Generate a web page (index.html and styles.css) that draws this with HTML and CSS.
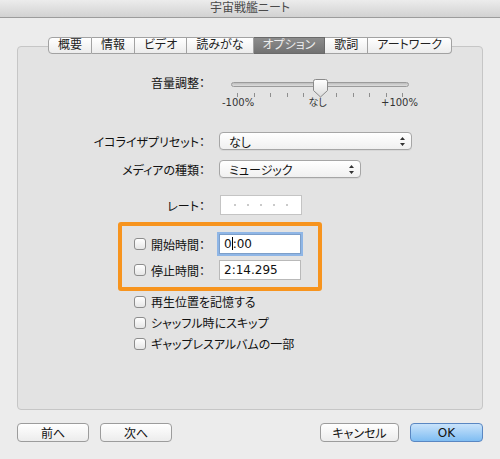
FILE: index.html
```html
<!DOCTYPE html>
<html lang="ja">
<head>
<meta charset="utf-8">
<title>宇宙戦艦ニート</title>
<link rel="stylesheet" href="styles.css">
</head>
<body>

<div class="window">
<!-- タイトルバー -->
<div class="titlebar">宇宙戦艦ニート</div>

<div class="dialog">
<!-- タブ -->
<div class="tabs">
<span class="tab">概要</span>
<span class="tab">情報</span>
<span class="tab">ビデオ</span>
<span class="tab">読みがな</span>
<span class="tab active">オプション</span>
<span class="tab">歌詞</span>
<span class="tab">アートワーク</span>
</div>

<div class="panel">
<!-- 音量調整 -->
<div class="row row-volume">
<label class="label">音量調整：</label>
<div class="slider">
<div class="track"></div>
<svg class="thumb" width="15" height="19" viewBox="0 0 15 19">
<defs>
<linearGradient id="thumbFill" x1="0" y1="0" x2="0" y2="1">
<stop offset="0" stop-color="#ffffff"/>
<stop offset="1" stop-color="#dcdcdc"/>
</linearGradient>
</defs>
<path d="M2.5 0.5 H12.5 A2 2 0 0 1 14.5 2.5 V11.5 L7.5 18 L0.5 11.5 V2.5 A2 2 0 0 1 2.5 0.5 Z" fill="url(#thumbFill)" stroke="#8a8a8a"/>
</svg>
<div class="ticks">
<i></i><i></i><i></i><i></i><i></i><i></i><i></i><i></i><i></i><i></i><i></i>
</div>
<div class="tick-labels">
<span>-100%</span>
<span>なし</span>
<span>+100%</span>
</div>
</div>
</div>

<!-- イコライザ -->
<div class="row row-eq">
<label class="label">イコライザプリセット：</label>
<div class="popup popup-wide">
<span>なし</span>
<svg class="arrows" width="5" height="9" viewBox="0 0 5 9"><path d="M2.5 0 L5 3 H0 Z M2.5 9 L5 6 H0 Z" fill="#333"/></svg>
</div>
</div>

<!-- メディアの種類 -->
<div class="row row-media">
<label class="label">メディアの種類：</label>
<div class="popup popup-narrow">
<span>ミュージック</span>
<svg class="arrows" width="5" height="9" viewBox="0 0 5 9"><path d="M2.5 0 L5 3 H0 Z M2.5 9 L5 6 H0 Z" fill="#333"/></svg>
</div>
</div>

<!-- レート -->
<div class="row row-rate">
<label class="label">レート：</label>
<div class="rating">
<i></i><i></i><i></i><i></i><i></i>
</div>
</div>

<!-- 開始・停止時間 -->
<div class="highlight">
<div class="time-row">
<label class="check"><span class="box"></span>開始時間：</label>
<div class="field focused">0<span class="caret"></span>:00</div>
</div>
<div class="time-row">
<label class="check"><span class="box"></span>停止時間：</label>
<div class="field">2:14.295</div>
</div>
</div>

<!-- チェックボックス -->
<div class="options">
<label class="check"><span class="box"></span>再生位置を記憶する</label>
<label class="check"><span class="box"></span>シャッフル時にスキップ</label>
<label class="check"><span class="box"></span>ギャップレスアルバムの一部</label>
</div>
</div>

<!-- ボタン -->
<div class="buttons">
<div class="btn-group">
<button class="btn">前へ</button>
<button class="btn">次へ</button>
</div>
<div class="btn-group">
<button class="btn btn-cancel">キャンセル</button>
<button class="btn btn-ok">OK</button>
</div>
</div>
</div>
</div>

</body>
</html>
```

FILE: styles.css
```css
* {
margin: 0;
padding: 0;
box-sizing: border-box;
}

body {
background: #ececec;
font-family: "DejaVu Sans", "Noto Sans CJK JP", sans-serif;
font-size: 12px;
font-feature-settings: "palt";
color: #111;
}

.window {
width: 500px;
height: 459px;
background: #ececec;
}

/* タイトルバー */
.titlebar {
height: 18px;
line-height: 17px;
text-align: center;
color: #4a4a4a;
background: linear-gradient(#ececec, #d2d2d2);
border-bottom: 1px solid #9c9c9c;
}

.dialog {
padding: 0 17px;
}

/* タブ */
.tabs {
position: relative;
z-index: 1;
display: flex;
justify-content: center;
margin-top: 19px;
}

.tab {
height: 17px;
line-height: 15px;
padding: 0 9px;
background: linear-gradient(#ffffff, #ececec);
border: 1px solid #a2a2a2;
border-left: none;
color: #222;
}

.tab:first-child {
border-left: 1px solid #a2a2a2;
border-radius: 4px 0 0 4px;
}

.tab:last-child {
border-radius: 0 4px 4px 0;
}

.tab.active {
background: linear-gradient(#8c8c8c, #727272);
border-color: #6a6a6a;
color: #ececec;
}

/* パネル */
.panel {
height: 364px;
margin-top: -8px;
padding-top: 29px;
background: #e3e3e3;
border: 1px solid #c6c6c6;
border-radius: 4px;
}

.row {
display: grid;
grid-template-columns: 187px auto;
column-gap: 14px;
align-items: center;
}

.label {
text-align: right;
}

.row-volume {
align-items: start;
}

.row-volume .label {
line-height: 16px;
}

.row-eq {
margin-top: 23px;
}

.row-media {
margin-top: 10px;
}

.row-rate {
margin-top: 17px;
}

/* スライダー */
.slider {
position: relative;
width: 178px;
margin-left: 12px;
}

.track {
height: 5px;
margin-top: 6px;
border: 1px solid #9b9b9b;
border-radius: 3px;
background: linear-gradient(#bdbdbd, #dedede);
}

.thumb {
position: absolute;
left: 82px;
top: 3px;
}

.ticks {
display: flex;
justify-content: space-between;
margin-top: 6px;
padding: 0 6px;
}

.ticks i {
width: 1px;
height: 4px;
background: #8e8e8e;
}

.tick-labels {
display: flex;
justify-content: space-between;
margin: 0 -9px;
line-height: 12px;
font-size: 10px;
color: #333;
}

/* ポップアップ */
.popup {
display: flex;
align-items: center;
justify-content: space-between;
height: 18px;
padding: 0 6px 0 9px;
background: linear-gradient(#ffffff, #f0f0f0);
border: 1px solid #a6a6a6;
border-radius: 4px;
box-shadow: 0 1px 0 rgba(0, 0, 0, 0.05);
}

.popup-wide {
width: 193px;
}

.popup-narrow {
width: 142px;
}

/* レート */
.rating {
display: flex;
align-items: center;
justify-content: center;
gap: 11px;
width: 82px;
height: 20px;
margin-left: 1px;
background: #fff;
border: 1px solid #c4c4c4;
}

.rating i {
width: 2px;
height: 2px;
border-radius: 50%;
background: #b8b8b8;
}

/* 開始・停止時間 */
.highlight {
width: 204px;
margin: 7px 0 0 100px;
padding: 8px 0 7px 12px;
border: 4px solid #f7941e;
border-radius: 3px;
display: flex;
flex-direction: column;
gap: 6px;
}

.time-row {
display: flex;
align-items: center;
}

.time-row .check {
width: 85px;
}

.field {
width: 82px;
height: 20px;
line-height: 18px;
padding-left: 4px;
background: #fff;
border: 1px solid #b9b9b9;
}

.field.focused {
border-color: #7d9fc9;
box-shadow: 0 0 0 2px #8fb6e6;
}

.caret {
display: inline-block;
width: 1px;
height: 13px;
vertical-align: -2px;
background: #000;
}

/* チェックボックス */
.check {
display: flex;
align-items: center;
gap: 5px;
}

.box {
width: 12px;
height: 12px;
border: 1px solid #8d8d8d;
border-radius: 3px;
background: linear-gradient(#ffffff, #e6e6e6);
}

.options {
margin-left: 116px;
}

.options .check {
height: 21px;
}

/* ボタン */
.buttons {
display: flex;
justify-content: space-between;
margin-top: 13px;
}

.btn-group {
display: flex;
gap: 11px;
}

.btn {
width: 72px;
height: 19px;
font: inherit;
color: #111;
background: linear-gradient(#ffffff, #ececec);
border: 1px solid #9c9c9c;
border-radius: 4px;
}

.btn-cancel {
width: 79px;
}

.btn-ok {
width: 73px;
background: linear-gradient(#c9e3fb, #7fbdf2);
border-color: #5a87c2;
}
```
